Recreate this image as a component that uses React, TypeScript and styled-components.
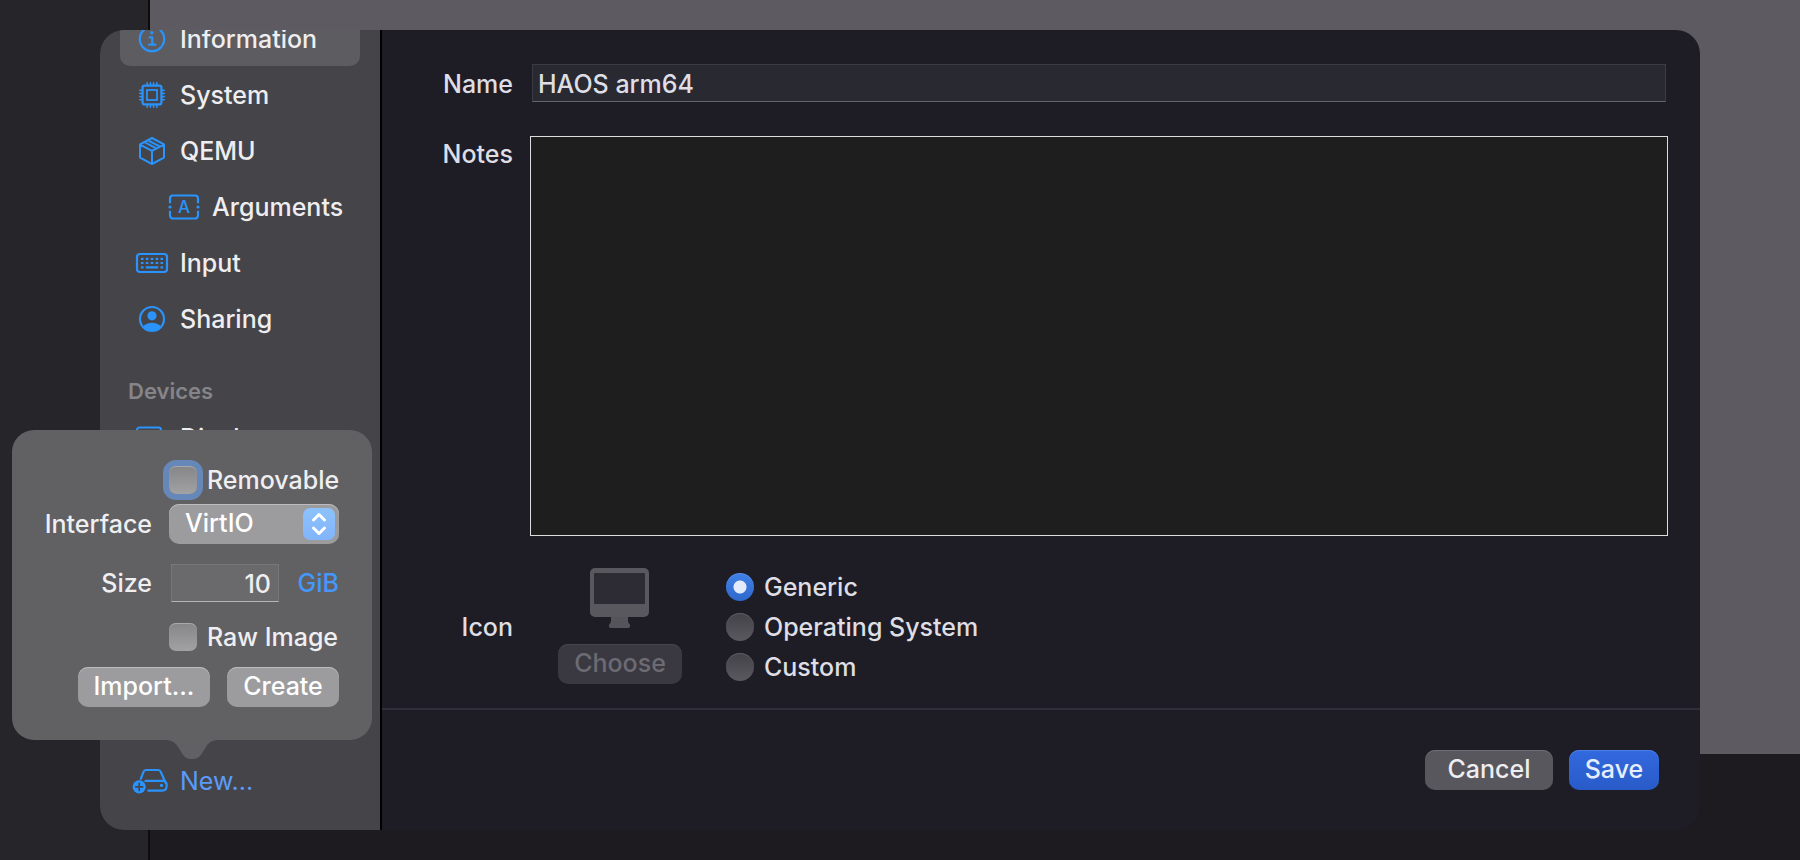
import React, { useId, useState } from "react";
import styled, { createGlobalStyle, css } from "styled-components";

const GlobalStyle = createGlobalStyle`
  *, *::before, *::after { box-sizing: border-box; }
  body {
    margin: 0;
    background: #262529;
    color: #dfdee5;
    font-family: Inter, "Liberation Sans", sans-serif;
    font-size: 25px;
    font-weight: 500;
    line-height: 32px;
  }
  button, input, select, textarea { font: inherit; color: inherit; margin: 0; }
  ul { list-style: none; margin: 0; padding: 0; }
`;

/* ---------- window behind the sheet ---------- */

const Screen = styled.div`
  display: grid;
  min-height: 100vh;
`;

const Backdrop = styled.div`
  grid-area: 1 / 1;
  display: flex;
`;

const BackdropList = styled.div`
  flex: 0 0 150px;
  background: #262529;
  border-right: 2px solid #0c0b0e;
`;

const BackdropDetail = styled.div`
  flex: 1;
  background: #5d5b61;
  border-bottom: 106px solid #1d1b1f;
`;

/* ---------- sheet ---------- */

const Sheet = styled.main`
  grid-area: 1 / 1;
  z-index: 1;
  display: flex;
  margin: 30px 100px;
  border-radius: 24px;
  background: #1e1d26;
`;

const Sidebar = styled.aside`
  flex: 0 0 282px;
  display: flex;
  flex-direction: column;
  padding-bottom: 22px;
  border-right: 2px solid #000;
  border-radius: 24px 0 0 24px;
  background: #454448;
`;

const ScrollArea = styled.nav`
  flex: 1 1 0;
  min-height: 0;
  overflow: hidden;
  border-top-left-radius: 24px;
`;

const ScrolledContent = styled.div`
  margin-top: -19px;
  padding: 0 20px;
`;

const SidebarRow = styled.li`
  padding: 1px 0;
`;

const SidebarLink = styled.a<{ $active?: boolean; $nested?: boolean; $accent?: boolean }>`
  display: flex;
  align-items: center;
  gap: 10px;
  height: 54px;
  padding-left: ${(p) => (p.$nested ? 46 : 14)}px;
  border-radius: 10px;
  background: ${(p) => (p.$active ? "#5d5c60" : "transparent")};
  color: ${(p) => (p.$accent ? "#5b9bf8" : "#eeedf0")};
  font-weight: ${(p) => (p.$accent ? 400 : 500)};
  text-decoration: none;
`;

const SidebarIcon = styled.svg`
  flex: none;
  width: 36px;
  height: 36px;
  overflow: visible;
  fill: none;
  stroke: #2a93fc;
  stroke-width: 2.2;
  stroke-linecap: round;
  stroke-linejoin: round;
`;

const SectionTitle = styled.h2`
  margin: 0;
  padding: 28px 8px 3px;
  color: #858489;
  font-size: 22px;
  line-height: 32px;
  font-weight: 600;
`;

const NewDrive = styled.div`
  position: relative;
  padding: 0 20px;
`;

/* ---------- shared controls ---------- */

type Tone = "plain" | "primary" | "light";

const tones: Record<Tone, ReturnType<typeof css>> = {
  plain: css`
    background: #58575d;
    box-shadow: inset 0 1px #6f6e74;
    color: #eeedf0;
  `,
  primary: css`
    background: linear-gradient(#3369df, #295bc8);
    box-shadow: inset 0 1px #4f7fe6;
    color: #e6edfd;
  `,
  light: css`
    background: #9c9c9e;
    box-shadow: inset 0 1px #bcbcbe;
    color: #fff;
  `,
};

const PushButton = styled.button<{ $tone?: Tone; $width: number }>`
  width: ${(p) => p.$width}px;
  height: 40px;
  padding: 0 0 2px;
  border: 0;
  border-radius: 10px;
  white-space: nowrap;
  ${(p) => tones[p.$tone ?? "plain"]}

  &:disabled {
    background: #3a3941;
    box-shadow: inset 0 1px #46454d;
    color: #6c6b73;
  }
`;

const TextField = styled.input<{ $light?: boolean }>`
  min-width: 0;
  height: 38px;
  padding: 2px 7px 0 5px;
  border: 1px solid ${(p) => (p.$light ? "#777679" : "#3c3b43")};
  border-bottom-color: ${(p) => (p.$light ? "#b5b5b7" : "#65646c")};
  border-radius: 0;
  background: ${(p) => (p.$light ? "#6a696c" : "#292932")};
  outline: none;
`;

const Option = styled.label`
  display: flex;
  align-items: center;
  gap: 10px;
  height: 40px;
  white-space: nowrap;
`;

const Radio = styled.input.attrs({ type: "radio" })`
  appearance: none;
  flex: none;
  width: 28px;
  height: 28px;
  border-radius: 50%;
  background: linear-gradient(#434248, #5a595f);
  box-shadow: inset 0 1px #5c5b61;

  &:checked {
    background: radial-gradient(circle, #e3ebfb 6px, transparent 7px),
      linear-gradient(#4080e6, #2e68cc);
    box-shadow: inset 0 1px #5c92ea;
  }
`;

const CheckBox = styled.input.attrs({ type: "checkbox" })<{ $focused?: boolean }>`
  appearance: none;
  flex: none;
  width: 28px;
  height: 28px;
  border-radius: 7px;
  background: linear-gradient(#868688, #a2a2a4);
  box-shadow: inset 0 1px #a9a9ab${(p) => (p.$focused ? ", 0 0 0 6px #6688b8" : "")};

  &:checked {
    background: #3478f6;
  }
`;

/* ---------- new drive popover ---------- */

const Popover = styled.form`
  position: absolute;
  left: -88px;
  bottom: calc(100% + 14px);
  display: grid;
  grid-template-columns: 1fr 170px;
  grid-template-rows: 44px 44px 74px 34px 66px;
  column-gap: 17px;
  align-items: center;
  width: 360px;
  padding: 28px 33px 20px 0;
  border-radius: 22px;
  background: #616063;
  color: #efeef1;
`;

const PopoverArrow = styled.svg`
  position: absolute;
  top: 100%;
  left: 154px;
  width: 52px;
  height: 19px;
  fill: #616063;
`;

const PopoverLabel = styled.label`
  text-align: right;
`;

const PopoverControl = styled.div`
  grid-column: 2;
  display: flex;
  align-items: center;
  justify-content: space-between;
`;

const PopoverActions = styled.div`
  grid-column: 1 / -1;
  display: flex;
  justify-content: flex-end;
  gap: 17px;
`;

const SizeField = styled(TextField)`
  width: 108px;
  margin-left: 2px;
  text-align: right;
`;

const UnitButton = styled.button`
  padding: 0;
  border: 0;
  background: none;
  color: #4597f8;
`;

const PopUp = styled.div`
  position: relative;
  flex: 1;
`;

const PopUpSelect = styled.select`
  appearance: none;
  width: 100%;
  height: 40px;
  padding: 0 40px 2px 16px;
  border: 0;
  border-radius: 10px;
  background: #9c9c9e;
  box-shadow: inset 0 1px #bcbcbe;
  color: #fff;
`;

const PopUpArrows = styled.svg`
  position: absolute;
  top: 4px;
  right: 4px;
  width: 32px;
  height: 32px;
  border-radius: 7px;
  background: linear-gradient(#8cc2fb, #82b4fb);
  fill: none;
  stroke: #fff;
  stroke-width: 3;
  stroke-linecap: round;
  stroke-linejoin: round;
  pointer-events: none;
`;

/* ---------- detail pane ---------- */

const Detail = styled.section`
  flex: 1;
  min-width: 0;
  display: flex;
  flex-direction: column;
`;

const Form = styled.form`
  flex: 1;
  display: grid;
  grid-template-columns: 131px 1fr;
  grid-template-rows: 38px 1fr 120px;
  column-gap: 17px;
  padding: 34px 32px 22px 0;
`;

const FieldLabel = styled.label<{ $top?: boolean }>`
  align-self: ${(p) => (p.$top ? "start" : "center")};
  padding-top: 2px;
  text-align: right;
`;

const NameField = styled(TextField)`
  margin: 0 2px;
`;

const NotesLabel = styled(FieldLabel)`
  margin-top: 34px;
`;

const Notes = styled.textarea`
  margin: 34px 0 30px;
  padding: 6px;
  border: 1px solid #dddde0;
  border-radius: 0;
  background: #1e1e1e;
  outline: none;
  resize: none;
`;

const IconChoice = styled.div`
  display: flex;
  align-items: center;
  gap: 44px;
  padding-left: 28px;
`;

const IconPreview = styled.div`
  display: flex;
  flex-direction: column;
  align-items: center;
  gap: 16px;
`;

const IconKinds = styled.div`
  padding-top: 2px;
`;

const Footer = styled.footer`
  display: flex;
  align-items: center;
  justify-content: flex-end;
  gap: 16px;
  height: 122px;
  padding: 0 41px;
  border-top: 2px solid #302f39;
`;

/* ---------- icons ---------- */

const InformationIcon = () => (
  <SidebarIcon viewBox="0 0 36 36" aria-hidden="true">
    <circle cx="18" cy="18" r="12.2" />
    <circle cx="17.8" cy="11.8" r="1.7" fill="#2a93fc" stroke="none" />
    <path d="M15.6 16.4h2.7v7.2M15 23.7h6.4" />
  </SidebarIcon>
);

const SystemIcon = () => (
  <SidebarIcon viewBox="0 0 36 36" aria-hidden="true">
    <rect x="8.6" y="8.6" width="18.8" height="18.8" rx="2" />
    <rect x="13" y="13" width="10" height="10" strokeWidth="1.8" strokeLinejoin="miter" />
    <path d="M13.2 5.8v2M16.4 5.8v2M19.6 5.8v2M22.8 5.8v2M13.2 28.2v2M16.4 28.2v2M19.6 28.2v2M22.8 28.2v2M5.8 13.2h2M5.8 16.4h2M5.8 19.6h2M5.8 22.8h2M28.2 13.2h2M28.2 16.4h2M28.2 19.6h2M28.2 22.8h2" strokeWidth="1.6" />
  </SidebarIcon>
);

const QemuIcon = () => (
  <SidebarIcon viewBox="0 0 36 36" aria-hidden="true">
    <path d="M18 5 30 11.400v13.200L18 31 6 24.600V11.400ZM6 11.600l12 6.200 12-6.200M18 17.800V31M10.500 9.200l11.800 6.200M14 7.300l11.800 6.200" strokeWidth="2" />
  </SidebarIcon>
);

const ArgumentsIcon = () => (
  <SidebarIcon viewBox="0 0 36 36" aria-hidden="true">
    <path d="M4 14.2V9.500a3 3 0 0 1 3-3h22a3 3 0 0 1 3 3v4.700M4 21.800v4.700a3 3 0 0 0 3 3h22a3 3 0 0 0 3-3v-4.700" strokeLinecap="butt" />
    <circle cx="4" cy="18" r="1.6" fill="#2a93fc" stroke="none" />
    <circle cx="32" cy="18" r="1.6" fill="#2a93fc" stroke="none" />
    <text x="18" y="24" fill="#2a93fc" stroke="none" fontSize="17" textAnchor="middle">A</text>
  </SidebarIcon>
);

const InputIcon = () => (
  <SidebarIcon viewBox="0 0 36 36" aria-hidden="true">
    <rect x="3" y="9" width="30" height="18" rx="3" />
    <path d="M6.900 13.800h22.200M6.900 18h22.200" strokeDasharray="2.600 2.300" strokeLinecap="butt" />
    <path d="M6.900 22.400h2.600M11.800 22.400h12.400M26.500 22.400h2.600" strokeLinecap="butt" />
  </SidebarIcon>
);

const SharingIcon = () => (
  <SidebarIcon viewBox="0 0 36 36" aria-hidden="true">
    <circle cx="18" cy="18" r="12" />
    <circle cx="18" cy="14.8" r="4.6" fill="#2a93fc" stroke="none" />
    <path d="M9.2 25.6c2-2.6 5.2-3.8 8.8-3.8s6.8 1.2 8.8 3.8c-2.2 2.8-5.2 4.4-8.8 4.4s-6.600-1.600-8.800-4.400Z" fill="#2a93fc" stroke="none" />
  </SidebarIcon>
);

const DisplayIcon = () => (
  <SidebarIcon viewBox="0 0 36 36" aria-hidden="true">
    <rect x="3" y="7.500" width="24" height="17" rx="2.500" />
    <path d="M11 29h8" />
  </SidebarIcon>
);

const NewDriveIcon = () => (
  <SidebarIcon viewBox="0 0 36 36" aria-hidden="true">
    <path d="M6.800 15.800 9.500 8.800C10 7.500 10.800 7 12 7h12.200c1.200 0 2 .5 2.500 1.800l5 11.200M11.500 17.900h17.300c2.300 0 3.900 1.900 3.900 4.600 0 3.200-1.600 5.100-4.400 5.100H14.200" />
    <circle cx="27.500" cy="22.400" r="1.700" fill="#2a93fc" stroke="none" />
    <circle cx="5.200" cy="23.800" r="6.600" fill="#2a93fc" stroke="none" />
    <path d="M5.200 20.300v7M1.700 23.800h7" stroke="#454448" strokeWidth="1.700" />
  </SidebarIcon>
);

const GenericComputer = () => (
  <svg width="60" height="60" viewBox="0 0 60 60" aria-hidden="true">
    <path d="M21 48h17v5c0 1.500 1 2.500 1.800 3.400.9 1.300.2 3.600-1.800 3.600H21c-2 0-2.700-2.300-1.800-3.600.8-.9 1.800-1.900 1.800-3.400Z" fill="#55545b" />
    <rect width="59" height="49" rx="5" fill="#59585f" />
    <rect x="4" y="5" width="51" height="31" rx="1" fill="#2d2c34" />
  </svg>
);

/* ---------- page ---------- */

const sections = [
  { name: "Information", Icon: InformationIcon },
  { name: "System", Icon: SystemIcon },
  { name: "QEMU", Icon: QemuIcon },
  { name: "Arguments", Icon: ArgumentsIcon, nested: true },
  { name: "Input", Icon: InputIcon },
  { name: "Sharing", Icon: SharingIcon },
];

const iconKinds = ["Generic", "Operating System", "Custom"];

function NewDrivePopover() {
  const id = useId();
  return (
    <Popover onSubmit={(e) => e.preventDefault()}>
      <PopoverControl>
        <Option>
          <CheckBox $focused />
          Removable
        </Option>
      </PopoverControl>
      <PopoverLabel htmlFor={`${id}-interface`}>Interface</PopoverLabel>
      <PopoverControl>
        <PopUp>
          <PopUpSelect id={`${id}-interface`} defaultValue="VirtIO">
            <option>VirtIO</option>
          </PopUpSelect>
          <PopUpArrows viewBox="0 0 32 32" aria-hidden="true">
            <path d="M10.500 12 16 6.500l5.500 5.500M10.500 20 16 25.500 21.500 20" />
          </PopUpArrows>
        </PopUp>
      </PopoverControl>
      <PopoverLabel htmlFor={`${id}-size`}>Size</PopoverLabel>
      <PopoverControl>
        <SizeField $light id={`${id}-size`} defaultValue="10" inputMode="numeric" />
        <UnitButton type="button">GiB</UnitButton>
      </PopoverControl>
      <PopoverControl>
        <Option>
          <CheckBox />
          Raw Image
        </Option>
      </PopoverControl>
      <PopoverActions>
        <PushButton type="button" $tone="light" $width={132}>Import...</PushButton>
        <PushButton type="submit" $tone="light" $width={112}>Create</PushButton>
      </PopoverActions>
      <PopoverArrow viewBox="0 0 52 19" aria-hidden="true">
        <path d="M0 0h52c-7 .5-9.500 3-12 7l-4.500 7c-2.500 4-5.500 5-9.500 5s-7-1-9.500-5L12 7C9.500 3 7 .5 0 0Z" />
      </PopoverArrow>
    </Popover>
  );
}

export default function App() {
  const id = useId();
  const [kind, setKind] = useState("Generic");

  return (
    <>
      <GlobalStyle />
      <Screen>
        <Backdrop>
          <BackdropList />
          <BackdropDetail />
        </Backdrop>
        <Sheet>
          <Sidebar>
            <ScrollArea aria-label="Settings">
              <ScrolledContent>
                <ul>
                  {sections.map(({ name, Icon, nested }, i) => (
                    <SidebarRow key={name}>
                      <SidebarLink href={`#${name}`} $active={i === 0} $nested={nested}>
                        <Icon />
                        {name}
                      </SidebarLink>
                    </SidebarRow>
                  ))}
                </ul>
                <SectionTitle>Devices</SectionTitle>
                <ul>
                  <SidebarRow>
                    <SidebarLink href="#Display">
                      <DisplayIcon />
                      Display
                    </SidebarLink>
                  </SidebarRow>
                </ul>
              </ScrolledContent>
            </ScrollArea>
            <NewDrive>
              <SidebarLink href="#New" $accent>
                <NewDriveIcon />
                New...
              </SidebarLink>
              <NewDrivePopover />
            </NewDrive>
          </Sidebar>
          <Detail>
            <Form id={`${id}-form`} onSubmit={(e) => e.preventDefault()}>
              <FieldLabel htmlFor={`${id}-name`}>Name</FieldLabel>
              <NameField id={`${id}-name`} defaultValue="HAOS arm64" />
              <NotesLabel $top htmlFor={`${id}-notes`}>Notes</NotesLabel>
              <Notes id={`${id}-notes`} />
              <FieldLabel as="span" id={`${id}-icon`}>Icon</FieldLabel>
              <IconChoice>
                <IconPreview>
                  <GenericComputer />
                  <PushButton type="button" disabled $width={124}>Choose</PushButton>
                </IconPreview>
                <IconKinds role="radiogroup" aria-labelledby={`${id}-icon`}>
                  {iconKinds.map((k) => (
                    <Option key={k}>
                      <Radio name="icon" checked={kind === k} onChange={() => setKind(k)} />
                      {k}
                    </Option>
                  ))}
                </IconKinds>
              </IconChoice>
            </Form>
            <Footer>
              <PushButton type="button" $width={128}>Cancel</PushButton>
              <PushButton type="submit" form={`${id}-form`} $tone="primary" $width={90}>Save</PushButton>
            </Footer>
          </Detail>
        </Sheet>
      </Screen>
    </>
  );
}
